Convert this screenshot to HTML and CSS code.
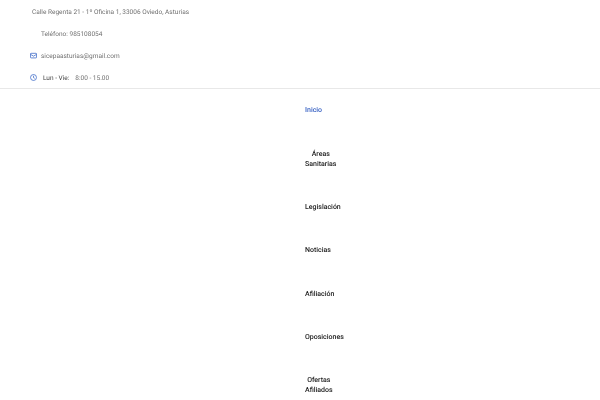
FILE: index.html
```html
<!DOCTYPE html>
<html>
<head>
    <title>SICEPA Asturias</title>
    <link rel="stylesheet" href="styles.css">
</head>
<body>
    <!-- Top info -->
    <header class="topbar">
        <div class="info-row address">Calle Regenta 21 - 1º Oficina 1, 33006 Oviedo, Asturias</div>
        <div class="info-row phone">Teléfono: 985108054</div>
        <div class="info-row mail">
            <svg class="icon" viewBox="0 0 16 16" fill="none" stroke="#3f6bc8" stroke-width="1.8">
                <rect x="1" y="3" width="14" height="10.5" rx="1.5"/>
                <path d="M1.5 5.5L8 9.5l6.5-4"/>
            </svg>
            <span>sicepaasturias@gmail.com</span>
        </div>
        <div class="info-row hours">
            <svg class="icon" viewBox="0 0 16 16" fill="none" stroke="#3f6bc8" stroke-width="1.8">
                <circle cx="8" cy="8" r="6.8"/>
                <path d="M8 4v4.4l2.8 1.4"/>
            </svg>
            <span class="days">Lun - Vie:</span>
            <span>8:00 - 15.00</span>
        </div>
    </header>

    <!-- Main menu -->
    <nav class="menu">
        <a class="menu-item active">Inicio</a>
        <a class="menu-item">Áreas Sanitarias</a>
        <a class="menu-item">Legislación</a>
        <a class="menu-item">Noticias</a>
        <a class="menu-item">Afiliación</a>
        <a class="menu-item">Oposiciones</a>
        <a class="menu-item">Ofertas Afiliados</a>
    </nav>
</body>
</html>
```

FILE: styles.css
```css
* {
    margin: 0;
    padding: 0;
    box-sizing: border-box;
}

body {
    font-family: 'Roboto', 'Liberation Sans', sans-serif;
    background: #fff;
    overflow: hidden;
    text-rendering: geometricPrecision;
}

.topbar {
    height: 89px;
    padding-top: 1px;
    border-bottom: 1px solid #e8e8e8;
    will-change: transform;
}

.info-row {
    display: flex;
    align-items: center;
    height: 22px;
    font-size: 6.5px;
    color: #707070;
}

.address {
    padding-left: 32px;
}

.phone {
    padding-left: 41px;
}

.mail,
.hours {
    padding-left: 30px;
}

.icon {
    width: 7px;
    height: 7px;
    margin-right: 4px;
    margin-bottom: 2px;
}

.days {
    color: #444;
    margin-left: 2px;
    margin-right: 6px;
}

.menu {
    display: flex;
    flex-direction: column;
    align-items: flex-start;
    margin-top: -1px;
    padding-left: 305px;
    will-change: transform;
}

.menu-item {
    width: min-content;
    padding: 16.65px 0;
    font-size: 7px;
    line-height: 10px;
    font-weight: 500;
    text-align: center;
    color: #222;
}

.menu-item.active {
    padding-bottom: 17.65px;
    color: #3a63c4;
}
```
